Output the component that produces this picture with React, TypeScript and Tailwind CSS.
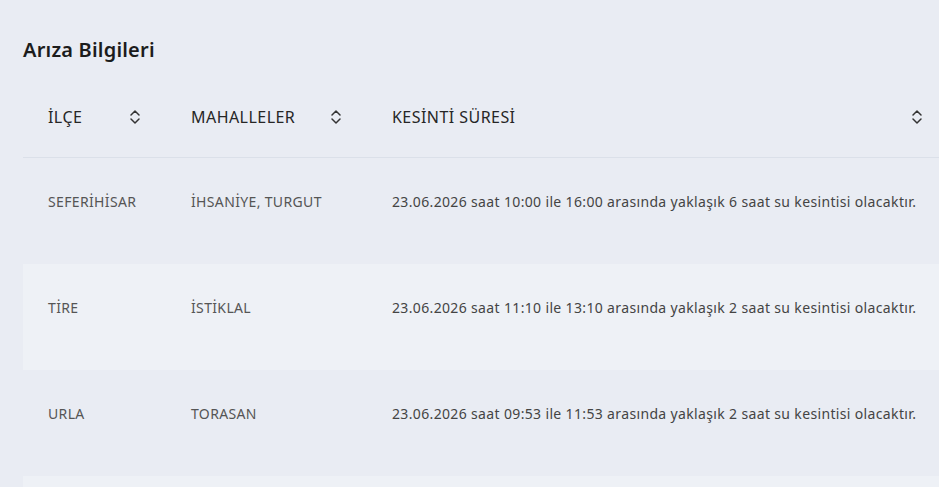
import React from "react";

const rows = [
  { ilce: "SEFERİHİSAR", mah: "İHSANİYE, TURGUT", text: "23.06.2026 saat 10:00 ile 16:00 arasında yaklaşık 6 saat su kesintisi olacaktır.", alt: false },
  { ilce: "TİRE", mah: "İSTİKLAL", text: "23.06.2026 saat 11:10 ile 13:10 arasında yaklaşık 2 saat su kesintisi olacaktır.", alt: true },
  { ilce: "URLA", mah: "TORASAN", text: "23.06.2026 saat 09:53 ile 11:53 arasında yaklaşık 2 saat su kesintisi olacaktır.", alt: false },
  { ilce: "", mah: "", text: "", alt: true },
];

function SortIcon() {
  return (
    <svg width="12" height="16" viewBox="0 0 12 16" fill="none" stroke="#333" strokeWidth="1.5" strokeLinecap="round" strokeLinejoin="round">
      <path d="M2 6 L6 2 L10 6" />
      <path d="M2 10 L6 14 L10 10" />
    </svg>
  );
}

export default function App() {
  return (
    <div className="w-[939px] h-[487px] overflow-hidden bg-[#e9ecf3]" style={{ fontFamily: "'Noto Sans', sans-serif" }}>
      <div className="pl-[23px] pt-[36px]">
        <h2 className="text-[20px] font-semibold text-[#1c1c1c] leading-[28px] tracking-[0.2px]">Arıza Bilgileri</h2>
        <div className="w-[925px] mt-[24px]">
          <div className="grid grid-cols-[143px_201px_1fr] h-[70px] border-b border-[#dbe0e9] items-center text-[16px] font-normal tracking-[0.45px] text-[#262626] pb-[12px]">
            <div className="flex items-center justify-between pl-[25px] pr-[25px]">
              <span>İLÇE</span>
              <SortIcon />
            </div>
            <div className="flex items-center justify-between pl-[25px] pr-[25px]">
              <span>MAHALLELER</span>
              <SortIcon />
            </div>
            <div className="flex items-center justify-between pl-[25px] pr-[25px]">
              <span>KESİNTİ SÜRESİ</span>
              <SortIcon />
            </div>
          </div>
          {rows.map((r, i) => (
            <div
              key={i}
              className={`grid grid-cols-[143px_201px_1fr] h-[106px] pt-[33px] text-[14px] tracking-[0.35px] text-[#555] ${r.alt ? "bg-[#eef1f6]" : ""}`}
            >
              <div className="pl-[25px]">{r.ilce}</div>
              <div className="pl-[25px]">{r.mah}</div>
              <div className="pl-[25px] text-[#444]">{r.text}</div>
            </div>
          ))}
        </div>
      </div>
    </div>
  );
}
